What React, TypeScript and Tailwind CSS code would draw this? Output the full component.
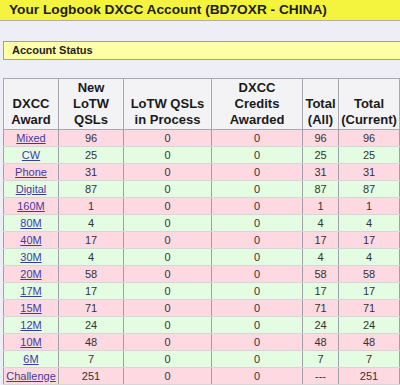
import React from 'react';

type Row = { award: string; newQsl: string; inProcess: string; credits: string; totalAll: string; totalCurrent: string };

const rows: Row[] = [
  { award: 'Mixed', newQsl: '96', inProcess: '0', credits: '0', totalAll: '96', totalCurrent: '96' },
  { award: 'CW', newQsl: '25', inProcess: '0', credits: '0', totalAll: '25', totalCurrent: '25' },
  { award: 'Phone', newQsl: '31', inProcess: '0', credits: '0', totalAll: '31', totalCurrent: '31' },
  { award: 'Digital', newQsl: '87', inProcess: '0', credits: '0', totalAll: '87', totalCurrent: '87' },
  { award: '160M', newQsl: '1', inProcess: '0', credits: '0', totalAll: '1', totalCurrent: '1' },
  { award: '80M', newQsl: '4', inProcess: '0', credits: '0', totalAll: '4', totalCurrent: '4' },
  { award: '40M', newQsl: '17', inProcess: '0', credits: '0', totalAll: '17', totalCurrent: '17' },
  { award: '30M', newQsl: '4', inProcess: '0', credits: '0', totalAll: '4', totalCurrent: '4' },
  { award: '20M', newQsl: '58', inProcess: '0', credits: '0', totalAll: '58', totalCurrent: '58' },
  { award: '17M', newQsl: '17', inProcess: '0', credits: '0', totalAll: '17', totalCurrent: '17' },
  { award: '15M', newQsl: '71', inProcess: '0', credits: '0', totalAll: '71', totalCurrent: '71' },
  { award: '12M', newQsl: '24', inProcess: '0', credits: '0', totalAll: '24', totalCurrent: '24' },
  { award: '10M', newQsl: '48', inProcess: '0', credits: '0', totalAll: '48', totalCurrent: '48' },
  { award: '6M', newQsl: '7', inProcess: '0', credits: '0', totalAll: '7', totalCurrent: '7' },
  { award: 'Challenge', newQsl: '251', inProcess: '0', credits: '0', totalAll: '---', totalCurrent: '251' },
];

const th = 'border border-[#a8a8b0] bg-[#f3f3f5] px-0 align-bottom text-center font-bold text-[13px] leading-[16px] text-[#1a1a1a] pb-[1px]';
const td = 'border-x border-x-[#a0a0a8] border-y border-y-[#d6d6d6] h-[17px] p-0 text-center text-[11px] leading-[15px] text-[#333]';

export default function App() {
  return (
    <div className="w-[400px] h-[385px] overflow-hidden bg-[#eeeef7]" style={{ fontFamily: '"Liberation Sans", Arial, sans-serif' }}>
      <div className="h-[21px] bg-[#f4f43e] border-b border-[#b0b0a0] pl-[9px] text-[13.7px] leading-[20px] font-bold text-[#1c1c1c] whitespace-nowrap">
        Your Logbook DXCC Account (BD7OXR - CHINA)
      </div>

      <div className="mt-[20px] ml-[3px] h-[19px] bg-[#ffffa6] border-y border-l border-[#a0a0a0] pl-[8px] text-[11px] leading-[17px] font-bold text-[#222]">
        Account Status
      </div>

      <table className="mt-[18px] ml-[3px] w-[396px] table-fixed border-collapse">
        <colgroup>
          <col className="w-[55px]" />
          <col className="w-[65px]" />
          <col className="w-[88px]" />
          <col className="w-[91px]" />
          <col className="w-[36px]" />
          <col className="w-[61px]" />
        </colgroup>
        <thead>
          <tr className="h-[51px]">
            <th className={th}>DXCC<br />Award</th>
            <th className={th}>New<br />LoTW<br />QSLs</th>
            <th className={th}>LoTW QSLs<br />in Process</th>
            <th className={th}>DXCC<br />Credits<br />Awarded</th>
            <th className={th}>Total<br />(All)</th>
            <th className={th}>Total<br />(Current)</th>
          </tr>
        </thead>
        <tbody>
          {rows.map((r, i) => (
            <tr key={r.award} className={i % 2 === 0 ? 'bg-[#ffd9e1]' : 'bg-[#e4fde2]'}>
              <td className={td}>
                <a href="#" className="text-[#3f3a9e] underline">{r.award}</a>
              </td>
              <td className={td}>{r.newQsl}</td>
              <td className={td}>{r.inProcess}</td>
              <td className={td}>{r.credits}</td>
              <td className={td}>{r.totalAll}</td>
              <td className={td}>{r.totalCurrent}</td>
            </tr>
          ))}
        </tbody>
      </table>
    </div>
  );
}
